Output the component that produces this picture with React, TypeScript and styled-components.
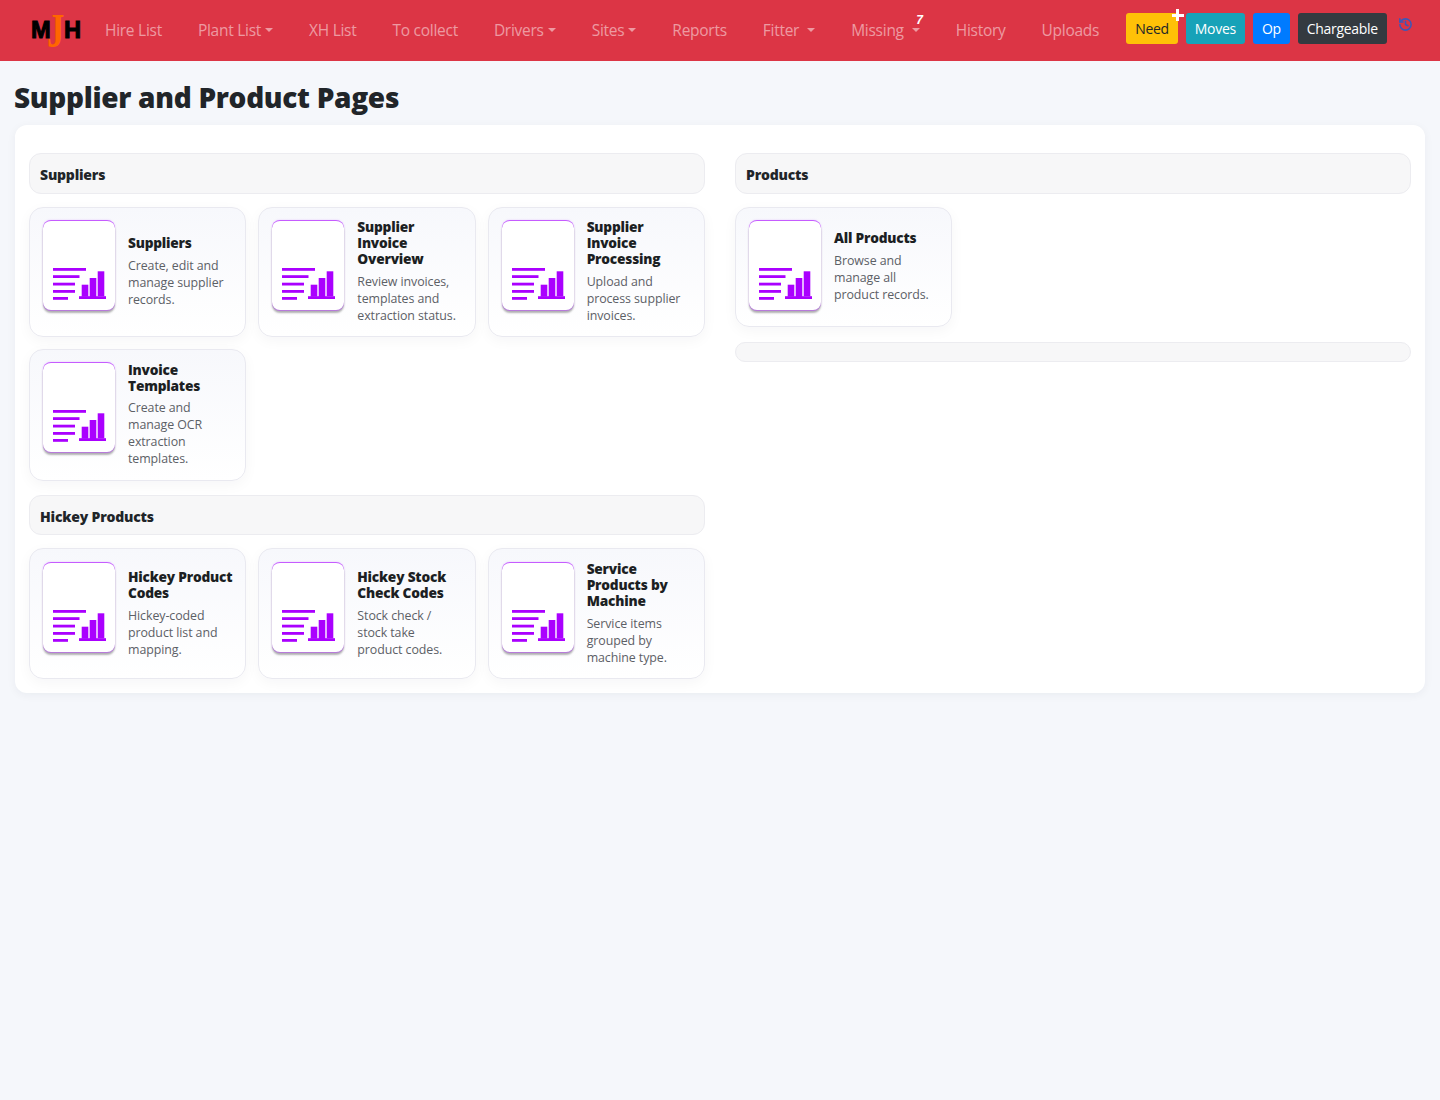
import React from "react";
import styled, { createGlobalStyle } from "styled-components";

const Global = createGlobalStyle`
  html, body { margin: 0; padding: 0; background: #f5f7fb; }
  body { font-family: "Open Sans", "Noto Sans", "Liberation Sans", sans-serif; color: #212529; min-height: 1100px; }
  * { box-sizing: border-box; }
`;

const NavBar = styled.nav`
  height: 61px;
  background: #dc3545;
  display: flex;
  align-items: flex-start;
  padding: 0 0 0 30px;
`;
const Logo = styled.svg`
  width: 54px;
  height: 36px;
  margin-top: 14px;
  flex: none;
  overflow: visible;
`;
const NavLinks = styled.div`
  display: flex;
  margin-left: 21px;
  height: 59px;
  align-items: center;
  gap: 36px;
`;
const NavLink = styled.a`
  position: relative;
  font-size: 15.5px;
  letter-spacing: -0.27px;
  color: rgba(255, 255, 255, 0.5);
  display: flex;
  align-items: center;
  white-space: nowrap;
`;
const Caret = styled.span<{ $gap?: number }>`
  display: inline-block;
  width: 0;
  height: 0;
  margin-left: ${(p) => p.$gap ?? 4}px;
  border-top: 4px solid rgba(255, 255, 255, 0.5);
  border-left: 4px solid transparent;
  border-right: 4px solid transparent;
`;
const Badge = styled.span`
  position: absolute;
  left: 65px;
  top: -6px;
  font-family: "Liberation Sans", sans-serif;
  font-size: 12px;
  font-weight: 700;
  font-style: italic;
  color: #fff;
`;
const Actions = styled.div`
  display: flex;
  gap: 8px;
  margin-left: 27px;
  margin-top: 13px;
  align-items: flex-start;
`;
const ActionButton = styled.button<{ $bg: string; $fg: string }>`
  position: relative;
  height: 31px;
  padding: 0 9px;
  border: 0;
  border-radius: 3px;
  font: 14px "Open Sans", sans-serif;
  letter-spacing: -0.3px;
  background: ${(p) => p.$bg};
  color: ${(p) => p.$fg};
`;
const Plus = styled.span`
  position: absolute;
  right: -6px;
  top: -4px;
  width: 12px;
  height: 12px;
  background:
    linear-gradient(#fff, #fff) center / 12px 3px no-repeat,
    linear-gradient(#fff, #fff) center / 3px 12px no-repeat;
`;
const HistoryIcon = styled.svg`
  width: 15px;
  height: 15px;
  margin: 4px 0 0 3px;
  color: #3d57b8;
`;

const Page = styled.main`
  padding: 19px 15px 0;
`;
const Title = styled.h1`
  margin: 0 0 11px -1px;
  font-size: 28px;
  line-height: 34px;
  font-weight: 800;
  color: #212529;
  letter-spacing: -0.3px;
`;
const Panel = styled.section`
  background: #fff;
  border-radius: 12px;
  box-shadow: 0 2px 10px rgba(20, 30, 60, 0.05);
  padding: 28px 14px 14px;
  display: grid;
  grid-template-columns: 1fr 1fr;
  gap: 30px;
`;
const Column = styled.div`
  display: flex;
  flex-direction: column;
  min-width: 0;
`;
const SectionHead = styled.div`
  height: 40.6px;
  border: 1px solid #ececf0;
  border-radius: 12px;
  background: #f7f7f8;
  padding: 2px 10px 0;
  display: flex;
  align-items: center;
  font-size: 14px;
  font-weight: 800;
  color: #212529;
  letter-spacing: -0.2px;
`;
const EmptyBar = styled.div`
  height: 20px;
  border: 1px solid #ececf0;
  border-radius: 10px;
  background: #f7f7f8;
  margin-top: 1.2px;
`;
const CardGrid = styled.div`
  display: grid;
  grid-template-columns: repeat(3, 1fr);
  gap: 12px;
  margin: 12.95px 0 14.3px;
  &:last-child { margin-bottom: 0; }
`;
const Card = styled.a`
  display: flex;
  gap: 13px;
  padding: 12.25px 10px 12.25px 13px;
  background: linear-gradient(180deg, #f7f8fc 0%, #ffffff 100%);
  border: 1px solid #e9e9f0;
  border-radius: 14px;
  box-shadow: 0 4px 14px rgba(20, 30, 60, 0.04);
`;
const Thumb = styled.div`
  flex: none;
  width: 72px;
  height: 90px;
  margin-bottom: 3.5px;
  background: #fff;
  border-radius: 8px;
  border-top: 1px solid #c65cff;
  box-shadow: 0 0 2px rgba(170, 60, 255, 0.28), 0 1px 0 #b87fd8, 0 3px 2px rgba(0, 0, 0, 0.3);
  display: flex;
  align-items: flex-end;
  padding: 0 0 10px 10px;
`;
const ThumbIcon = styled.svg`
  width: 54px;
  height: 32px;
  display: block;
`;
const CardBody = styled.div`
  align-self: center;
  min-width: 0;
`;
const CardTitle = styled.h3`
  margin: -0.5px 0 5.5px;
  font-size: 13.7px;
  line-height: 16px;
  font-weight: 800;
  color: #1c1f23;
  letter-spacing: -0.2px;
`;
const CardText = styled.p`
  margin: 0;
  padding-right: 6px;
  font-size: 12.4px;
  line-height: 17px;
  letter-spacing: -0.08px;
  color: #5c6066;
`;

const Report = () => (
  <Thumb>
    <ThumbIcon viewBox="0 0 54 32" fill="#aa00ff">
      <rect x="0" y="0" width="33" height="2.8" />
      <rect x="0" y="7.2" width="26.5" height="2.8" />
      <rect x="0" y="14.7" width="22" height="2.8" />
      <rect x="0" y="22" width="22" height="2.8" />
      <rect x="0" y="29" width="15" height="2.8" />
      <rect x="26" y="28.2" width="27" height="2.8" />
      <rect x="28.7" y="16.7" width="6.6" height="12" />
      <rect x="36.7" y="10" width="6.6" height="19" />
      <rect x="44.7" y="3.3" width="6.6" height="25" />
    </ThumbIcon>
  </Thumb>
);

const ProductCard = ({ title, text }: { title: string; text: string }) => (
  <Card>
    <Report />
    <CardBody>
      <CardTitle>{title}</CardTitle>
      <CardText>{text}</CardText>
    </CardBody>
  </Card>
);

const suppliers = [
  ["Suppliers", "Create, edit and manage supplier records."],
  ["Supplier Invoice Overview", "Review invoices, templates and extraction status."],
  ["Supplier Invoice Processing", "Upload and process supplier invoices."],
  ["Invoice Templates", "Create and manage OCR extraction templates."],
];
const hickey = [
  ["Hickey Product Codes", "Hickey-coded product list and mapping."],
  ["Hickey Stock Check Codes", "Stock check / stock take product codes."],
  ["Service Products by Machine", "Service items grouped by machine type."],
];

export default function App() {
  return (
    <>
      <Global />
      <NavBar>
        <Logo viewBox="0 0 54 36">
          <text x="1" y="24" fontFamily="Liberation Sans" fontWeight="700" fontSize="23.6" stroke="#000" strokeWidth="1" fill="#000">M</text>
          <text x="34" y="24" fontFamily="Liberation Sans" fontWeight="700" fontSize="23.6" stroke="#000" strokeWidth="1" fill="#000">H</text>
          <text transform="translate(17,33) scale(0.72,1)" fontFamily="Liberation Serif" fontWeight="700" fontSize="48" fill="#ff6600">J</text>
        </Logo>
        <NavLinks>
          <NavLink>Hire List</NavLink>
          <NavLink>Plant List<Caret /></NavLink>
          <NavLink>XH List</NavLink>
          <NavLink>To collect</NavLink>
          <NavLink>Drivers<Caret /></NavLink>
          <NavLink>Sites<Caret /></NavLink>
          <NavLink>Reports</NavLink>
          <NavLink>Fitter<Caret $gap={8} /></NavLink>
          <NavLink>Missing<Caret $gap={8} /><Badge>7</Badge></NavLink>
          <NavLink>History</NavLink>
          <NavLink>Uploads</NavLink>
        </NavLinks>
        <Actions>
          <ActionButton $bg="#ffc107" $fg="#212529">Need<Plus /></ActionButton>
          <ActionButton $bg="#17a2b8" $fg="#fff">Moves</ActionButton>
          <ActionButton $bg="#007bff" $fg="#fff">Op</ActionButton>
          <ActionButton $bg="#343a40" $fg="#fff">Chargeable</ActionButton>
          <HistoryIcon viewBox="0 0 24 24" fill="none" stroke="currentColor" strokeWidth="2.5" strokeLinecap="round" strokeLinejoin="round">
            <path d="M3 12a9 9 0 1 0 9-9 9.75 9.75 0 0 0-6.74 2.74L3 8" />
            <path d="M3 3v5h5" />
            <path d="M12 7v5l4 2" />
          </HistoryIcon>
        </Actions>
      </NavBar>
      <Page>
        <Title>Supplier and Product Pages</Title>
        <Panel>
          <Column>
            <SectionHead>Suppliers</SectionHead>
            <CardGrid>
              {suppliers.map(([t, d]) => <ProductCard key={t} title={t} text={d} />)}
            </CardGrid>
            <SectionHead>Hickey Products</SectionHead>
            <CardGrid>
              {hickey.map(([t, d]) => <ProductCard key={t} title={t} text={d} />)}
            </CardGrid>
          </Column>
          <Column>
            <SectionHead>Products</SectionHead>
            <CardGrid>
              <ProductCard title="All Products" text="Browse and manage all product records." />
            </CardGrid>
            <EmptyBar />
          </Column>
        </Panel>
      </Page>
    </>
  );
}
